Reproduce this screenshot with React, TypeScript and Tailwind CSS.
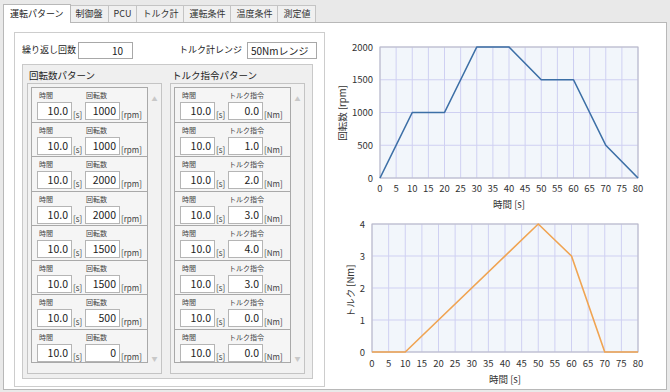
import React from "react";

const FONT = '"Noto Sans CJK JP", "Noto Sans", sans-serif';

const tabs = ["運転パターン", "制御盤", "PCU", "トルク計", "運転条件", "温度条件", "測定値"];
const speeds = ["1000", "1000", "2000", "2000", "1500", "1500", "500", "0"];
const torques = ["0.0", "1.0", "2.0", "3.0", "4.0", "3.0", "0.0", "0.0"];

type Pt = [number, number];

function Chart({
  x, y, w, h, yMax, yStep, data, color, title, titleX, titleY, labelY, axisY,
}: {
  x: number; y: number; w: number; h: number; yMax: number; yStep: number;
  data: Pt[]; color: string; title: string; titleX: number; titleY: number;
  labelY: number; axisY: number;
}) {
  const px = (t: number) => x + (t / 80) * w;
  const py = (v: number) => y + h - (v / yMax) * h;
  const xs = Array.from({ length: 17 }, (_, i) => i * 5);
  const ys = Array.from({ length: yMax / yStep + 1 }, (_, i) => i * yStep);
  return (
    <g style={{ fontFamily: FONT }}>
      <rect x={x} y={y} width={w} height={h} fill="#f2f6fb" />
      {xs.map((t) => (
        <line key={"v" + t} x1={px(t)} x2={px(t)} y1={y} y2={y + h} stroke="#cfd0f2" strokeWidth={1} />
      ))}
      {ys.map((v) => (
        <line key={"h" + v} x1={x} x2={x + w} y1={py(v)} y2={py(v)} stroke="#cfd0f2" strokeWidth={1} />
      ))}
      <rect x={x} y={y} width={w} height={h} fill="none" stroke="#b9b9c4" strokeWidth={1} />
      <polyline
        points={data.map(([t, v]) => `${px(t)},${py(v)}`).join(" ")}
        fill="none"
        stroke={color}
        strokeWidth={1.6}
        strokeLinejoin="round"
      />
      {ys.map((v) => (
        <text key={"yl" + v} x={x - 7} y={py(v) + 3.5} fontSize={9.5} textAnchor="end" fill="#333">
          {v}
        </text>
      ))}
      {xs.map((t) => (
        <text key={"xl" + t} x={px(t)} y={labelY} fontSize={9.5} textAnchor="middle" fill="#333">
          {t}
        </text>
      ))}
      <text x={x + w / 2} y={axisY} fontSize={9.5} textAnchor="middle" fill="#333">
        時間 [s]
      </text>
      <text
        x={titleX}
        y={titleY}
        fontSize={9.5}
        textAnchor="middle"
        fill="#333"
        transform={`rotate(-90 ${titleX} ${titleY})`}
      >
        {title}
      </text>
    </g>
  );
}

function Row({ value, label, unit, last }: { value: string; label: string; unit: string; last?: boolean }) {
  return (
    <div
      className={
        "h-[34.5px] shrink-0 border-x border-t border-[#a9a9a9] bg-[#f5f5f5] pl-[5px] pt-[3px] " +
        (last ? "border-b" : "")
      }
    >
      <div className="flex whitespace-nowrap text-[7px] leading-[9px] text-[#444]">
        <span className="ml-[2px] w-[47px]">時間</span>
        <span>{label}</span>
      </div>
      <div className="mt-[2px] flex items-end">
        <div className="flex h-[18px] w-[35px] items-center justify-end border border-[#b5b5b5] bg-white pr-[3px] text-[10.5px]">
          10.0
        </div>
        <span className="ml-[1px] w-[12px] text-[8px] leading-[10px] text-[#444]">[s]</span>
        <div className="flex h-[18px] w-[35px] items-center justify-end border border-[#b5b5b5] bg-white pr-[3px] text-[10.5px]">
          {value}
        </div>
        <span className="ml-[1px] text-[8px] leading-[10px] text-[#444]">{unit}</span>
      </div>
    </div>
  );
}

function ListPanel({ label, unit, values }: { label: string; unit: string; values: string[] }) {
  return (
    <div className="flex h-[291px] w-[135px] border border-[#c4c4c4] bg-[#f2f2f2] pl-[3px] pt-[3px]">
      <div className="flex w-[117px] flex-col">
        {values.map((v, i) => (
          <Row key={i} value={v} label={label} unit={unit} last={i === values.length - 1} />
        ))}
      </div>
      <div className="flex w-[13px] flex-col items-center justify-between pb-[10px] pt-[7px] text-[6px] text-[#c8c8c8]">
        <span>▲</span>
        <span>▼</span>
      </div>
    </div>
  );
}

export default function App() {
  const speedData: Pt[] = [
    [0, 0], [10, 1000], [20, 1000], [30, 2000], [40, 2000], [50, 1500], [60, 1500], [70, 500], [80, 0],
  ];
  const torqueData: Pt[] = [[0, 0], [10, 0], [50, 4], [60, 3], [70, 0], [80, 0]];

  return (
    <div className="h-[392px] w-[670px] overflow-hidden bg-[#e9e9e9] text-[#222]" style={{ fontFamily: FONT }}>
      {/* tabs */}
      <div className="flex h-[22px] items-end pl-[3px]">
        {tabs.map((t, i) => (
          <div
            key={t}
            className={
              i === 0
                ? "relative z-10 -mb-px flex h-[19px] items-center border border-b-0 border-[#b8b8b8] bg-white px-[6px] text-[9px]"
                : "flex h-[17px] items-center border border-l-0 border-b-0 border-[#c4c4c4] bg-[#f0f0f0] px-[5px] text-[9px] text-[#333]"
            }
          >
            {t}
          </div>
        ))}
      </div>

      {/* content */}
      <div className="ml-[3px] flex h-[368px] w-[664px] border border-[#b8b8b8] bg-white">
        {/* left */}
        <div className="ml-[10px] mt-[9px] h-[355px] w-[311px] border border-[#cdcdcd] bg-white px-[7px] pt-[8px]">
          <div className="flex h-[18px] items-center whitespace-nowrap text-[9px]">
            <span className="w-[56px]">繰り返し回数</span>
            <div className="flex h-[17px] w-[55px] items-center justify-end border border-[#a8a8a8] pr-[9px] text-[10px]">
              10
            </div>
            <span className="ml-auto mr-[5px]">トルク計レンジ</span>
            <div className="flex h-[17px] w-[70px] items-center border border-[#a8a8a8] pl-[3px] text-[10px]">
              50Nmレンジ
            </div>
          </div>
          <div className="mt-[5px] h-[315px] w-[291px] border border-[#c9c9c9] bg-[#efefef] pl-[4px] pt-[3px]">
            <div className="flex whitespace-nowrap text-[9.5px] leading-[14px]">
              <span className="ml-[2px] w-[143px]">回転数パターン</span>
              <span>トルク指令パターン</span>
            </div>
            <div className="mt-[1px] flex gap-[8px]">
              <ListPanel label="回転数" unit="[rpm]" values={speeds} />
              <ListPanel label="トルク指令" unit="[Nm]" values={torques} />
            </div>
          </div>
        </div>

        {/* charts */}
        <div className="ml-[8px] flex flex-col">
          <svg width={330} height={190}>
            <Chart
              x={47} y={24} w={258} h={131}
              yMax={2000} yStep={500}
              data={speedData}
              color="#3c6fa6"
              title="回転数 [rpm]"
              titleX={13} titleY={90}
              labelY={169} axisY={185}
            />
          </svg>
          <svg width={330} height={176}>
            <Chart
              x={39} y={11} w={266} h={128}
              yMax={4} yStep={1}
              data={torqueData}
              color="#f0a452"
              title="トルク [Nm]"
              titleX={21} titleY={78}
              labelY={154} axisY={170}
            />
          </svg>
        </div>
      </div>
    </div>
  );
}
